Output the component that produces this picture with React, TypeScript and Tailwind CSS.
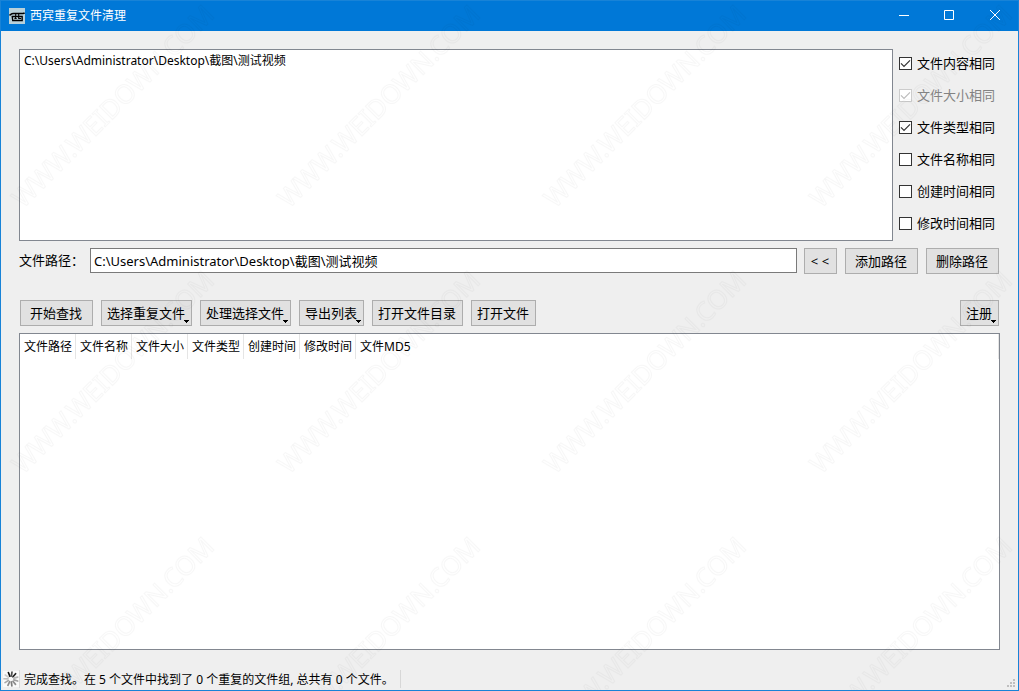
import { useState } from 'react'
import type { ReactNode } from 'react'

const columns = ['文件路径', '文件名称', '文件大小', '文件类型', '创建时间', '修改时间', '文件MD5']

const options = [
  { id: 'content', label: '文件内容相同', checked: true },
  { id: 'size', label: '文件大小相同', checked: true, disabled: true },
  { id: 'type', label: '文件类型相同', checked: true },
  { id: 'name', label: '文件名称相同', checked: false },
  { id: 'created', label: '创建时间相同', checked: false },
  { id: 'modified', label: '修改时间相同', checked: false },
]

const actions = [
  { label: '开始查找', className: 'w-[73px]' },
  { label: '选择重复文件', menu: true, className: 'w-[91px]' },
  { label: '处理选择文件', menu: true, className: 'w-[91px]' },
  { label: '导出列表', menu: true, className: 'w-[65px]' },
  { label: '打开文件目录', className: 'w-[91px]' },
  { label: '打开文件', className: 'w-[65px]' },
]

type PushButtonProps = {
  children: ReactNode
  menu?: boolean
  className?: string
}

const PushButton = ({ children, menu, className }: PushButtonProps) => (
  <button
    type="button"
    aria-haspopup={menu ? 'menu' : undefined}
    className={`relative flex h-[26px] shrink-0 items-center justify-center whitespace-nowrap border border-[#adadad] bg-[#e1e1e1] pr-px pb-px text-[13px] leading-5 hover:border-[#0078d7] hover:bg-[#e5f1fb] ${className}`}
  >
    {children}
    {menu && (
      <svg className="absolute right-0.5 bottom-0.5" width="5" height="3" viewBox="0 0 5 3" shapeRendering="crispEdges">
        <path d="M0 0h5v1H4v1H3v1H2V2H1V1H0z" />
      </svg>
    )}
  </button>
)

const TitleBar = () => (
  <header className="flex h-[30px] items-center bg-[#0078d7] text-white">
    <svg className="ml-2 shrink-0" width="16" height="16" viewBox="0 0 16 16">
      <rect width="16" height="16" fill="#b9d1da" />
      <g fill="none" stroke="#000">
        <path d="M.5 7.3C1.8 6.4 2.6 5.5 4.5 5.5H14c.8 0 1.2-.2 1.6-.6" strokeWidth="1.5" />
        <path d="M3.2 8.5h10v4H3.7z" strokeWidth="1.3" />
        <path d="M6.7 5.8v3c0 1-.4 1.6-1.2 2M9.7 5.8v4.7h2.5M6.2 10.5h1.5" strokeWidth="1.1" />
      </g>
    </svg>
    <h1 className="ml-[5px] flex-1 text-xs">西宾重复文件清理</h1>
    <button type="button" aria-label="最小化" className="flex h-full w-[45px] items-center justify-center pb-0.5 hover:bg-[#1a86db]">
      <svg width="10" height="10" viewBox="0 0 10 10" stroke="currentColor">
        <path d="M0 5.5h10" />
      </svg>
    </button>
    <button type="button" aria-label="最大化" className="flex h-full w-[45px] items-center justify-center pb-0.5 hover:bg-[#1a86db]">
      <svg width="10" height="10" viewBox="0 0 10 10" fill="none" stroke="currentColor">
        <path d="M.5.5h9v9h-9z" />
      </svg>
    </button>
    <button type="button" aria-label="关闭" className="flex h-full w-[47px] items-center justify-center pb-0.5 hover:bg-[#e81123]">
      <svg width="10" height="10" viewBox="0 0 10 10" fill="none" stroke="currentColor">
        <path d="M0 0l10 10M10 0L0 10" />
      </svg>
    </button>
  </header>
)

const MatchOptions = () => (
  <fieldset className="-mt-0.5 flex w-[101px] shrink-0 flex-col pb-0.5">
    {options.map((option) => (
      <label
        key={option.id}
        className={`flex h-8 items-center gap-[5px] whitespace-nowrap text-[13px] leading-5 ${option.disabled ? 'text-[#838383]' : ''}`}
      >
        <span className="grid size-[13px] shrink-0">
          <input
            type="checkbox"
            name={option.id}
            defaultChecked={option.checked}
            disabled={option.disabled}
            className="peer col-start-1 row-start-1 size-[13px] appearance-none border border-[#333333] bg-white disabled:border-[#cccccc]"
          />
          <svg
            className="pointer-events-none invisible col-start-1 row-start-1 text-[#333333] peer-checked:visible peer-disabled:text-[#bcbcbc]"
            width="13"
            height="13"
            viewBox="0 0 13 13"
            fill="none"
            stroke="currentColor"
            strokeWidth="1.2"
          >
            <path d="M2 6.4l3 3 6-6" />
          </svg>
        </span>
        {option.label}
      </label>
    ))}
  </fieldset>
)

// 状态栏左侧的忙碌图标，从正上方开始顺时针
const spokes = ['#4d4d4d', '#222222', '#b5b5b5', '#a0a0a0', '#8c8c8c', '#7d7d7d', '#8c8c8c', '#a8a8a8', '#bdbdbd', '#cccccc', '#111111']

const Spinner = () => (
  <svg className="shrink-0" width="16" height="16" viewBox="0 0 16 16">
    <rect width="16" height="16" fill="#fafafa" />
    {spokes.map((color, index) => (
      <path
        key={index}
        d="M8 5V1"
        stroke={color}
        strokeWidth="1.7"
        strokeLinecap="round"
        transform={`rotate(${index * 33 + 8} 8 8)`}
      />
    ))}
  </svg>
)

const StatusBar = () => (
  <footer className="flex h-[22px] items-center pl-0.5 text-xs">
    <Spinner />
    <p className="flex h-[18px] items-center whitespace-pre border-x border-[#d7d7d7] pt-px pr-1.5 pl-1">
      完成查找。在 5 个文件中找到了 0 个重复的文件组, 总共有 0 个文件。
    </p>
    <svg className="mr-[3px] ml-auto self-end" width="8" height="11" viewBox="0 0 8 11" fill="#bfbfbf" shapeRendering="crispEdges">
      <path d="M6 0h2v2H6zM3 3h2v2H3zM6 3h2v2H6zM0 6h2v2H0zM3 6h2v2H3zM6 6h2v2H6z" />
    </svg>
  </footer>
)

const Watermark = () => (
  <svg className="pointer-events-none absolute inset-0 h-full w-full" aria-hidden="true">
    <defs>
      <pattern id="watermark" width="266" height="266" patternUnits="userSpaceOnUse">
        <text
          transform="translate(22 208) rotate(-45)"
          className="font-['Noto_Sans']"
          fontSize="26"
          fill="none"
          stroke="#000"
          strokeOpacity="0.03"
          strokeWidth="1"
        >
          WWW.WEIDOWN.COM
        </text>
      </pattern>
    </defs>
    <rect width="100%" height="100%" fill="url(#watermark)" />
  </svg>
)

const App = () => {
  const [path, setPath] = useState('C:\\Users\\Administrator\\Desktop\\截图\\测试视频')

  return (
    <div className="relative flex min-h-screen flex-col border border-[#1883d7] bg-[#efefef] font-['Noto_Sans','Noto_Sans_CJK_SC',sans-serif] text-black">
      <TitleBar />

      <main className="flex flex-1 flex-col px-[18px] pt-[18px]">
        {/* 待查找目录和匹配条件 */}
        <div className="flex gap-1.5">
          <ul aria-label="查找路径" className="min-w-0 flex-1 border border-[#828790] bg-white px-1 py-[3px] text-xs">
            <li className="leading-4">C:\Users\Administrator\Desktop\截图\测试视频</li>
          </ul>
          <MatchOptions />
        </div>

        {/* 路径输入 */}
        <div className="mt-[7px] flex gap-2">
          <label htmlFor="path" className="w-[63px] shrink-0 whitespace-nowrap text-[13px] leading-[25px]">
            文件路径：
          </label>
          <input
            id="path"
            type="text"
            value={path}
            onChange={(event) => setPath(event.target.value)}
            className="-mr-px h-[25px] min-w-0 flex-1 border border-[#7a7a7a] bg-white px-[3px] text-[13px] outline-none focus:border-[#0078d7]"
          />
          <PushButton className="w-[33px]">&lt; &lt;</PushButton>
          <PushButton className="w-[73px]">添加路径</PushButton>
          <PushButton className="mr-px w-[73px]">删除路径</PushButton>
        </div>

        {/* 工具栏 */}
        <div className="mt-[26px] flex gap-2 px-px">
          {actions.map((action) => (
            <PushButton key={action.label} menu={action.menu} className={action.className}>
              {action.label}
            </PushButton>
          ))}
          <PushButton menu className="ml-auto w-[39px]">
            注册
          </PushButton>
        </div>

        {/* 查找结果 */}
        <div className="mt-[7px] flex-1 border border-[#828790] bg-white">
          <table className="w-full table-fixed border-separate border-spacing-0 text-xs">
            <thead>
              <tr className="h-[25px]">
                {columns.map((column, index) => (
                  <th
                    key={column}
                    scope="col"
                    className={`whitespace-nowrap border-r border-[#e5e5e5] px-0 pl-1 text-left font-normal ${index < columns.length - 1 ? 'w-14' : ''}`}
                  >
                    {column}
                  </th>
                ))}
              </tr>
            </thead>
            <tbody />
          </table>
        </div>
        <div className="h-[18px]" />
      </main>

      <StatusBar />
      <Watermark />
    </div>
  )
}

export default App
